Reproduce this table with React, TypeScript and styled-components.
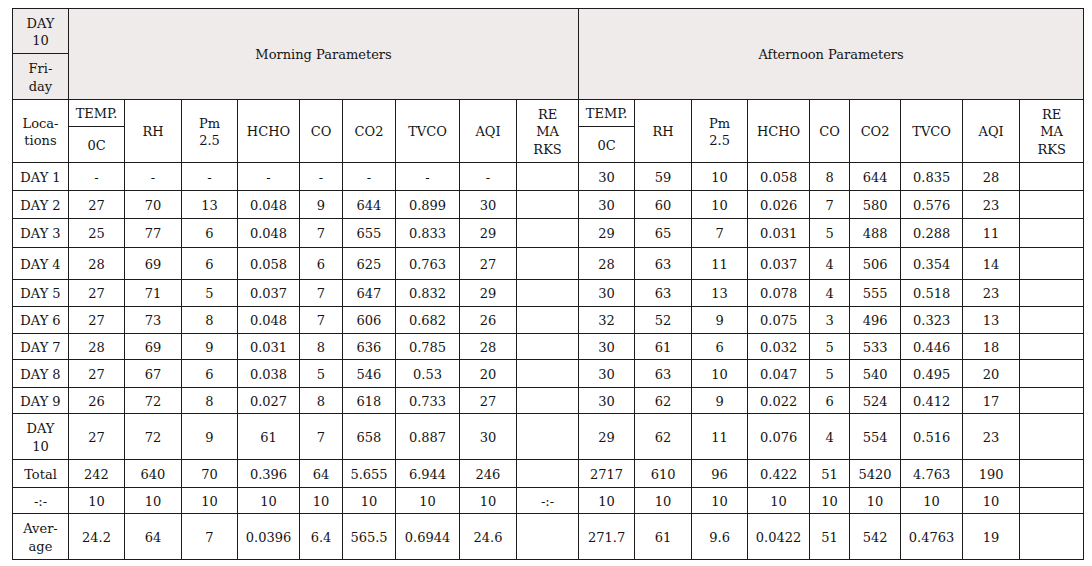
import React from "react";
import styled, { createGlobalStyle } from "styled-components";

const GlobalStyle = createGlobalStyle`
  body {
    margin: 0;
    background: #ffffff;
  }
`;

const Page = styled.div`
  padding: 8px 9px 0 12px;
`;

const Table = styled.table`
  width: 1071px;
  table-layout: fixed;
  border-collapse: collapse;
  font-family: "DejaVu Serif", "Liberation Serif", serif;
  font-size: 13px;
  line-height: 17.5px;
  color: #141414;
`;

const Row = styled.tr<{ $h: number }>`
  height: ${(p) => p.$h}px;
`;

const Cell = styled.td<{ $shade?: boolean }>`
  border: 1px solid #1c1c1c;
  padding: 2px 2px 0;
  text-align: center;
  vertical-align: middle;
  background: ${(p) => (p.$shade ? "#efebea" : "#ffffff")};
  overflow: hidden;
`;

const colWidths = [
  56, 56, 57, 56, 62, 43, 53, 64, 57, 62, 56, 57, 56, 62, 40, 51, 62, 57, 64,
];

type Line = {
  label: React.ReactNode;
  h: number;
  morning: string[];
  mid?: string;
  afternoon: string[];
};

const rows: Line[] = [
  {
    label: "DAY 1",
    h: 28,
    morning: ["-", "-", "-", "-", "-", "-", "-", "-"],
    afternoon: ["30", "59", "10", "0.058", "8", "644", "0.835", "28"],
  },
  {
    label: "DAY 2",
    h: 28,
    morning: ["27", "70", "13", "0.048", "9", "644", "0.899", "30"],
    afternoon: ["30", "60", "10", "0.026", "7", "580", "0.576", "23"],
  },
  {
    label: "DAY 3",
    h: 29,
    morning: ["25", "77", "6", "0.048", "7", "655", "0.833", "29"],
    afternoon: ["29", "65", "7", "0.031", "5", "488", "0.288", "11"],
  },
  {
    label: "DAY 4",
    h: 32,
    morning: ["28", "69", "6", "0.058", "6", "625", "0.763", "27"],
    afternoon: ["28", "63", "11", "0.037", "4", "506", "0.354", "14"],
  },
  {
    label: "DAY 5",
    h: 27,
    morning: ["27", "71", "5", "0.037", "7", "647", "0.832", "29"],
    afternoon: ["30", "63", "13", "0.078", "4", "555", "0.518", "23"],
  },
  {
    label: "DAY 6",
    h: 27,
    morning: ["27", "73", "8", "0.048", "7", "606", "0.682", "26"],
    afternoon: ["32", "52", "9", "0.075", "3", "496", "0.323", "13"],
  },
  {
    label: "DAY 7",
    h: 26,
    morning: ["28", "69", "9", "0.031", "8", "636", "0.785", "28"],
    afternoon: ["30", "61", "6", "0.032", "5", "533", "0.446", "18"],
  },
  {
    label: "DAY 8",
    h: 28,
    morning: ["27", "67", "6", "0.038", "5", "546", "0.53", "20"],
    afternoon: ["30", "63", "10", "0.047", "5", "540", "0.495", "20"],
  },
  {
    label: "DAY 9",
    h: 26,
    morning: ["26", "72", "8", "0.027", "8", "618", "0.733", "27"],
    afternoon: ["30", "62", "9", "0.022", "6", "524", "0.412", "17"],
  },
  {
    label: (
      <>
        DAY
        <br />
        10
      </>
    ),
    h: 46,
    morning: ["27", "72", "9", "61", "7", "658", "0.887", "30"],
    afternoon: ["29", "62", "11", "0.076", "4", "554", "0.516", "23"],
  },
  {
    label: "Total",
    h: 28,
    morning: ["242", "640", "70", "0.396", "64", "5.655", "6.944", "246"],
    afternoon: ["2717", "610", "96", "0.422", "51", "5420", "4.763", "190"],
  },
  {
    label: "-:-",
    h: 26,
    morning: ["10", "10", "10", "10", "10", "10", "10", "10"],
    mid: "-:-",
    afternoon: ["10", "10", "10", "10", "10", "10", "10", "10"],
  },
  {
    label: (
      <>
        Aver-
        <br />
        age
      </>
    ),
    h: 46,
    morning: ["24.2", "64", "7", "0.0396", "6.4", "565.5", "0.6944", "24.6"],
    afternoon: ["271.7", "61", "9.6", "0.0422", "51", "542", "0.4763", "19"],
  },
];

const ParamHeads = () => (
  <>
    <Cell>TEMP.</Cell>
    <Cell rowSpan={2}>RH</Cell>
    <Cell rowSpan={2}>
      Pm
      <br />
      2.5
    </Cell>
    <Cell rowSpan={2}>HCHO</Cell>
    <Cell rowSpan={2}>CO</Cell>
    <Cell rowSpan={2}>CO2</Cell>
    <Cell rowSpan={2}>TVCO</Cell>
    <Cell rowSpan={2}>AQI</Cell>
  </>
);

const Remarks = () => (
  <Cell rowSpan={2}>
    RE
    <br />
    MA
    <br />
    RKS
  </Cell>
);

const App = () => {
  return (
    <Page>
      <GlobalStyle />
      <Table>
        <colgroup>
          {colWidths.map((w, i) => (
            <col key={i} style={{ width: w }} />
          ))}
        </colgroup>
        <thead>
          <Row $h={45}>
            <Cell $shade>
              DAY
              <br />
              10
            </Cell>
            <Cell $shade colSpan={9} rowSpan={2}>
              Morning Parameters
            </Cell>
            <Cell $shade colSpan={9} rowSpan={2}>
              Afternoon Parameters
            </Cell>
          </Row>
          <Row $h={46}>
            <Cell $shade>
              Fri-
              <br />
              day
            </Cell>
          </Row>
          <Row $h={27}>
            <Cell rowSpan={2}>
              Loca-
              <br />
              tions
            </Cell>
            <ParamHeads />
            <Remarks />
            <ParamHeads />
            <Remarks />
          </Row>
          <Row $h={36}>
            <Cell>0C</Cell>
            <Cell>0C</Cell>
          </Row>
        </thead>
        <tbody>
          {rows.map((r, i) => (
            <Row key={i} $h={r.h}>
              <Cell>{r.label}</Cell>
              {r.morning.map((v, j) => (
                <Cell key={`m${j}`}>{v}</Cell>
              ))}
              <Cell>{r.mid ?? ""}</Cell>
              {r.afternoon.map((v, j) => (
                <Cell key={`a${j}`}>{v}</Cell>
              ))}
              <Cell />
            </Row>
          ))}
        </tbody>
      </Table>
    </Page>
  );
};

export default App;
